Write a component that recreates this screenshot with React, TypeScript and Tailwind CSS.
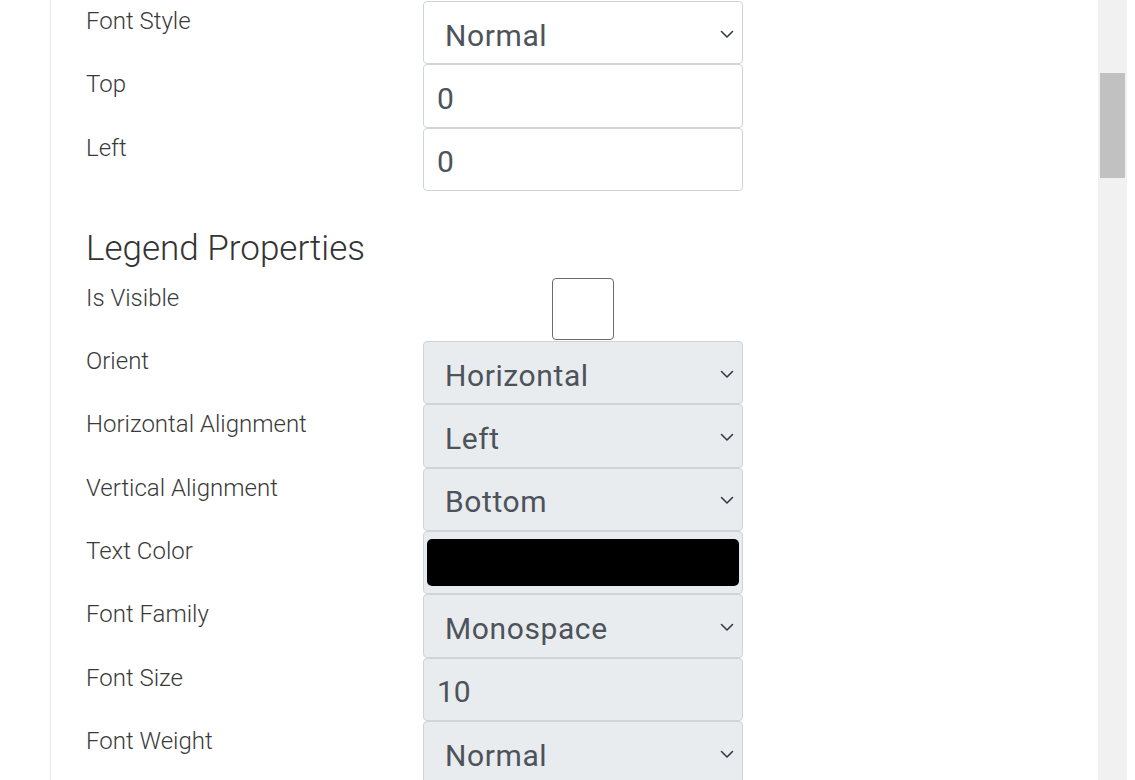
const font = { fontFamily: "Roboto, 'Noto Sans', sans-serif" };

const Chevron = () => (
  <svg width="14" height="9" viewBox="0 0 14 9" fill="none" className="mt-[3px] shrink-0">
    <path d="M1.5 1.5l5.5 5.5 5.5-5.5" stroke="#343a40" strokeWidth="1.6" strokeLinecap="round" strokeLinejoin="round" />
  </svg>
);

type Field =
  | { kind: "select"; value: string }
  | { kind: "input"; value: string }
  | { kind: "check" }
  | { kind: "color" };

const Control = ({ field, disabled }: { field: Field; disabled?: boolean }) => {
  const bg = disabled ? "bg-[#e9ecef]" : "bg-white";
  if (field.kind === "check") {
    return (
      <div className="flex h-full w-full items-start justify-center">
        <div className="h-[62px] w-[62px] rounded-[4px] border-[1.5px] border-[#6b6b6b] bg-white" />
      </div>
    );
  }
  if (field.kind === "color") {
    return (
      <div className={`h-full w-full rounded-[4px] border border-[#ced4da] ${bg} px-[3px] py-[7px]`}>
        <div className="h-full w-full rounded-[5px] bg-black" />
      </div>
    );
  }
  if (field.kind === "select") {
    return (
      <div className={`flex h-full w-full items-center justify-between rounded-[4px] border border-[#ced4da] ${bg} pl-[21px] pr-[8px] text-[30px] tracking-[0.6px] text-[#4d535a]`}>
        <span className="pt-[5px]">{field.value}</span>
        <Chevron />
      </div>
    );
  }
  return (
    <div className={`flex h-full w-full items-center rounded-[4px] border border-[#ced4da] ${bg} pl-[13px] text-[30px] text-[#4d535a]`}>
      <span className="pt-[5px]">{field.value}</span>
    </div>
  );
};

const Row = ({ label, field, disabled }: { label: string; field: Field; disabled?: boolean }) => (
  <div className="flex h-[63.3px]">
    <div className="w-[337px] pt-[1px] text-[24px] leading-[38px] font-light text-[#3a3a3a]">{label}</div>
    <div className="w-[320px]">
      <Control field={field} disabled={disabled} />
    </div>
  </div>
);

export default function App() {
  return (
    <div className="flex h-[780px] w-[1135px] overflow-hidden bg-white" style={font}>
      <div className="w-[50px] shrink-0" />
      <div className="flex-1 border-l border-[#e8e8e8] pl-[35px] pt-[1px]">
        <Row label="Font Style" field={{ kind: "select", value: "Normal" }} />
        <Row label="Top" field={{ kind: "input", value: "0" }} />
        <Row label="Left" field={{ kind: "input", value: "0" }} />

        <h2 className="pt-[38px] pb-[9px] text-[35px] leading-[40px] font-light text-[#333]">Legend Properties</h2>

        <Row label="Is Visible" field={{ kind: "check" }} />
        <Row label="Orient" field={{ kind: "select", value: "Horizontal" }} disabled />
        <Row label="Horizontal Alignment" field={{ kind: "select", value: "Left" }} disabled />
        <Row label="Vertical Alignment" field={{ kind: "select", value: "Bottom" }} disabled />
        <Row label="Text Color" field={{ kind: "color" }} disabled />
        <Row label="Font Family" field={{ kind: "select", value: "Monospace" }} disabled />
        <Row label="Font Size" field={{ kind: "input", value: "10" }} disabled />
        <Row label="Font Weight" field={{ kind: "select", value: "Normal" }} disabled />
      </div>
      <div className="w-[29px] shrink-0 bg-[#f1f1f1] px-[2px] pt-[73px]">
        <div className="h-[105px] w-full bg-[#c1c1c1]" />
      </div>
      <div className="w-[8px] shrink-0" />
    </div>
  );
}
